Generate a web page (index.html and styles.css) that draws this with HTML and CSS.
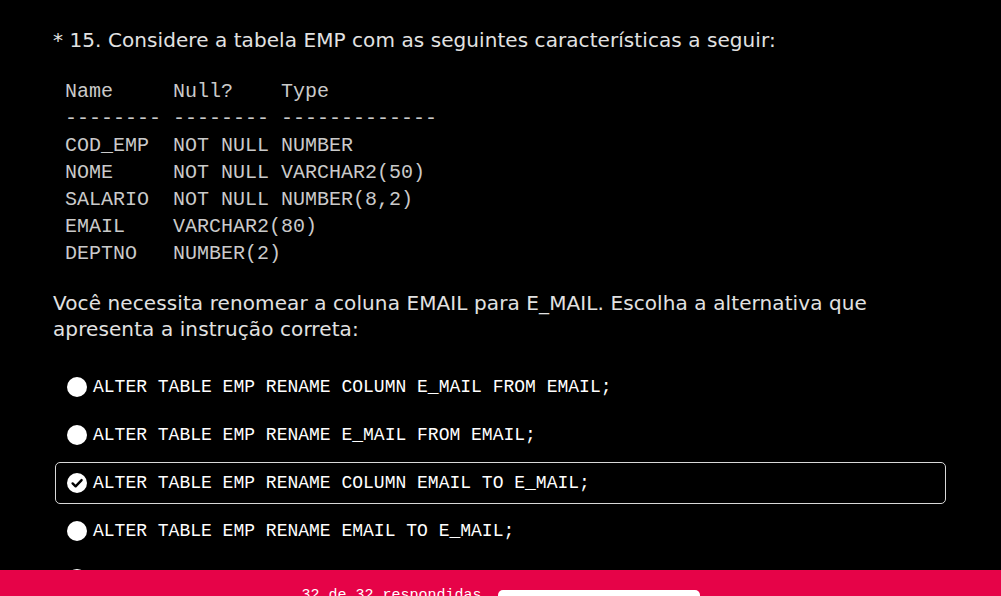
FILE: index.html
```html
<!DOCTYPE html>
<html lang="pt">
<head>
<meta charset="utf-8">
<link rel="stylesheet" href="styles.css">
</head>
<body>
<main class="question">
  <h2 class="title">* 15. Considere a tabela EMP com as seguintes características a seguir:</h2>
  <pre class="schema">Name     Null?    Type
-------- -------- -------------
COD_EMP  NOT NULL NUMBER
NOME     NOT NULL VARCHAR2(50)
SALARIO  NOT NULL NUMBER(8,2)
EMAIL    VARCHAR2(80)
DEPTNO   NUMBER(2)</pre>
  <p class="prompt">Você necessita renomear a coluna EMAIL para E_MAIL. Escolha a alternativa que apresenta a instrução correta:</p>
  <ul class="options">
    <li class="option"><span class="radio"></span><span class="code">ALTER TABLE EMP RENAME COLUMN E_MAIL FROM EMAIL;</span></li>
    <li class="option"><span class="radio"></span><span class="code">ALTER TABLE EMP RENAME E_MAIL FROM EMAIL;</span></li>
    <li class="option selected"><span class="radio checked"><svg viewBox="0 0 20 20" width="20" height="20"><circle cx="10" cy="10" r="10" fill="#fff"/><path d="M5.6 10.4 L8.6 13.3 L14.6 7.1" fill="none" stroke="#000" stroke-width="2.4" stroke-linecap="round" stroke-linejoin="round"/></svg></span><span class="code">ALTER TABLE EMP RENAME COLUMN EMAIL TO E_MAIL;</span></li>
    <li class="option"><span class="radio"></span><span class="code">ALTER TABLE EMP RENAME EMAIL TO E_MAIL;</span></li>
    <li class="option"><span class="radio"></span><span class="code">ALTER TABLE EMP MODIFY COLUMN EMAIL TO E_MAIL;</span></li>
  </ul>
</main>
<footer class="bar">
  <span class="count">32 de 32 respondidas</span>
  <span class="submit"></span>
</footer>
</body>
</html>
```
FILE: styles.css
```css
html, body {
  margin: 0;
  background: #000;
}
body {
  font-family: "DejaVu Sans", Verdana, sans-serif;
  color: #e2e2e2;
}
.question {
  padding: 27px 0 60px 53px;
  width: 893px;
}
.title {
  margin: 0;
  font-size: 20px;
  font-weight: normal;
  line-height: 26px;
  letter-spacing: 0.07px;
}
.schema {
  margin: 25px 0 0 12px;
  font-family: "Liberation Mono", "Courier New", monospace;
  font-size: 20px;
  line-height: 27px;
  color: #cacaca;
}
.prompt {
  margin: 23px 0 0 0;
  font-size: 20px;
  line-height: 26px;
  letter-spacing: 0.1px;
}
.options {
  list-style: none;
  margin: 24px 0 0 2px;
  padding: 0;
  display: flex;
  flex-direction: column;
  gap: 6px;
}
.option {
  height: 42px;
  box-sizing: border-box;
  border: 1px solid transparent;
  border-radius: 5px;
  padding-left: 11px;
  display: flex;
  align-items: center;
  gap: 6px;
}
.option.selected {
  border-color: #d8d8d8;
}
.radio {
  width: 20px;
  height: 20px;
  border-radius: 50%;
  background: #fff;
  flex: none;
  display: block;
}
.radio.checked {
  background: none;
}
.radio svg {
  display: block;
}
.code {
  font-family: "Liberation Mono", "Courier New", monospace;
  font-size: 18px;
  color: #fff;
}
.bar {
  position: fixed;
  left: 0;
  right: 0;
  bottom: 0;
  height: 26px;
  overflow: hidden;
  background: #e60348;
  display: flex;
  justify-content: center;
  align-items: flex-start;
  gap: 16px;
  padding-top: 18px;
  box-sizing: border-box;
}
.count {
  font-family: "Liberation Mono", "Courier New", monospace;
  font-size: 15px;
  line-height: 15px;
  color: #fff;
}
.submit {
  width: 202px;
  height: 30px;
  background: #fff;
  border-radius: 5px;
  margin-top: 2px;
}
```
